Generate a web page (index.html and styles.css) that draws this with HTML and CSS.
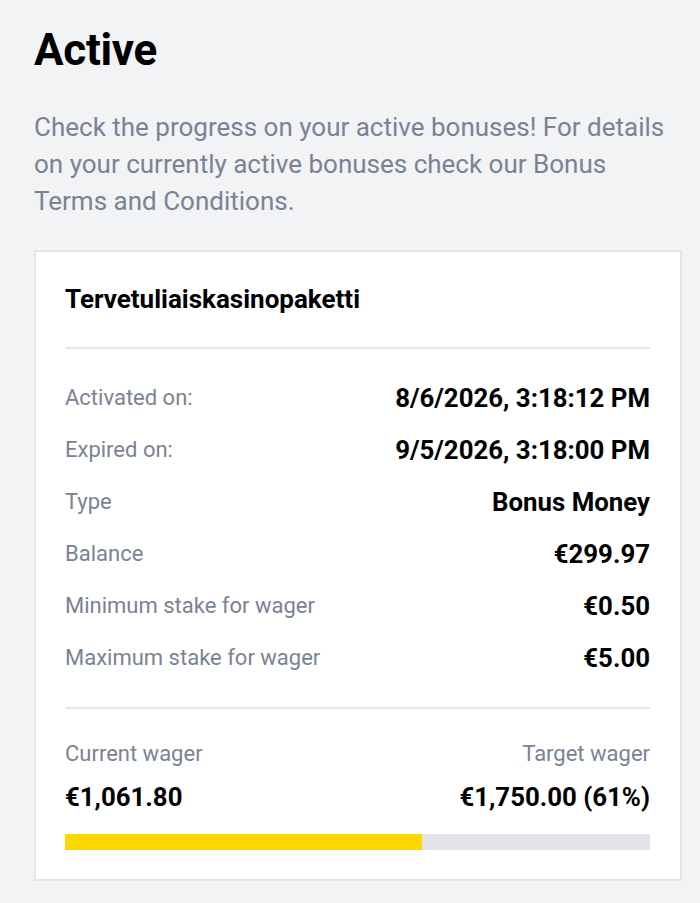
FILE: index.html
```html
<!DOCTYPE html>
<html lang="en">
<head>
<meta charset="utf-8">
<title>Active</title>
<link rel="stylesheet" href="styles.css">
</head>
<body>
<main class="page">
  <h1 class="title">Active</h1>
  <p class="intro">Check the progress on your active bonuses! For details on your currently active bonuses check our Bonus Terms and Conditions.</p>
  <section class="card">
    <h2 class="card-title">Tervetuliaiskasinopaketti</h2>
    <div class="divider"></div>
    <dl class="rows">
      <div class="row"><dt>Activated on:</dt><dd>8/6/2026, 3:18:12 PM</dd></div>
      <div class="row"><dt>Expired on:</dt><dd>9/5/2026, 3:18:00 PM</dd></div>
      <div class="row"><dt>Type</dt><dd>Bonus Money</dd></div>
      <div class="row"><dt>Balance</dt><dd>€299.97</dd></div>
      <div class="row"><dt>Minimum stake for wager</dt><dd>€0.50</dd></div>
      <div class="row"><dt>Maximum stake for wager</dt><dd>€5.00</dd></div>
    </dl>
    <div class="divider"></div>
    <div class="wager">
      <div class="wager-col">
        <span class="wager-label">Current wager</span>
        <span class="wager-value">€1,061.80</span>
      </div>
      <div class="wager-col wager-right">
        <span class="wager-label">Target wager</span>
        <span class="wager-value">€1,750.00 (61%)</span>
      </div>
    </div>
    <div class="bar"><div class="bar-fill" style="width: 61%"></div></div>
  </section>
</main>
</body>
</html>
```
FILE: styles.css
```css
* { box-sizing: border-box; }
html, body { margin: 0; padding: 0; }
body {
  background: #f2f3f5;
  font-family: Roboto, "Liberation Sans", sans-serif;
  color: #000;
}
.page {
  padding: 24px 18px 0 34px;
}
.title {
  margin: 0;
  font-size: 44px;
  font-weight: 700;
  line-height: 52px;
  letter-spacing: -0.3px;
}
.intro {
  margin: 33px 0 0;
  font-size: 26px;
  line-height: 37px;
  color: #7a8393;
}
.card {
  margin-top: 30px;
  background: #fff;
  border: 2px solid #e3e5e9;
  padding: 33px 30px 29px 29px;
}
.card-title {
  margin: 0;
  font-size: 26px;
  font-weight: 700;
  line-height: 28px;
}
.divider {
  height: 2px;
  background: #e6e8eb;
  margin: 34px 0;
}
.rows {
  margin: 0;
  display: flex;
  flex-direction: column;
  gap: 22px;
}
.row {
  display: flex;
  justify-content: space-between;
  align-items: center;
  line-height: 30px;
}
.row dt {
  font-size: 22px;
  color: #7a8393;
}
.row dd {
  margin: 0;
  font-size: 25.8px;
  font-weight: 700;
}
.wager {
  display: flex;
  justify-content: space-between;
  margin-top: -3px;
}
.wager-col {
  display: flex;
  flex-direction: column;
  gap: 15px;
}
.wager-right { align-items: flex-end; }
.wager-label {
  font-size: 22px;
  line-height: 28px;
  color: #7a8393;
}
.wager-value {
  font-size: 25.8px;
  font-weight: 700;
  line-height: 28px;
}
.bar {
  margin-top: 23px;
  height: 16px;
  background: #e1e3e8;
}
.bar-fill {
  height: 100%;
  background: #fcd800;
}
```
